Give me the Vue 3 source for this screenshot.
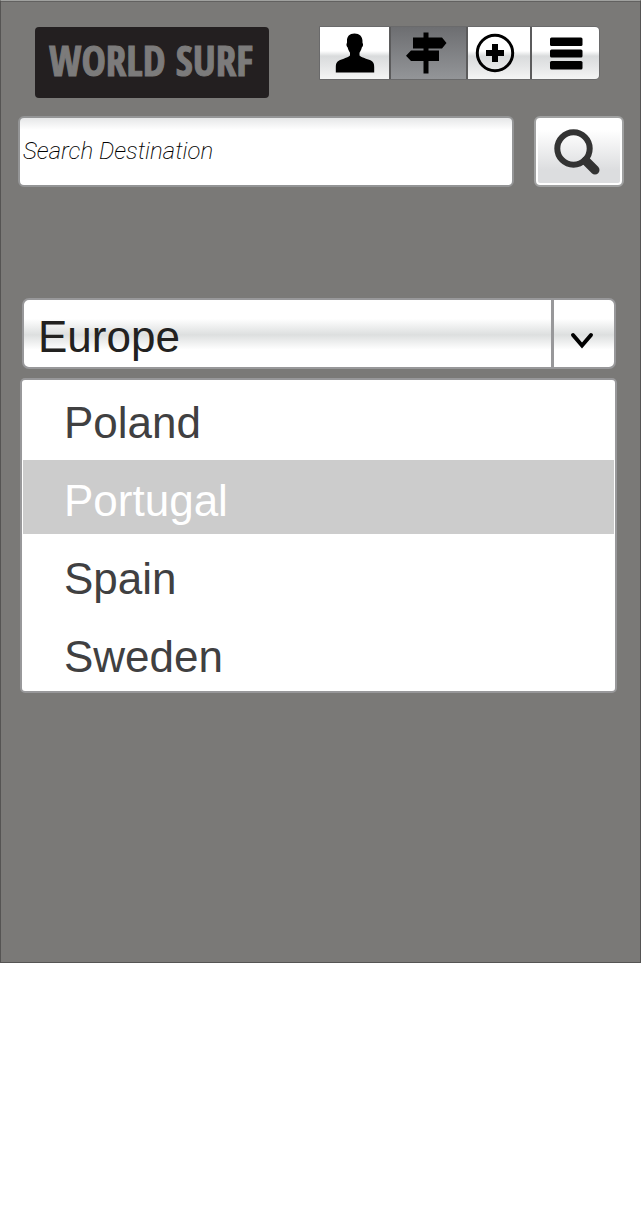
<script setup>
import { ref } from 'vue'

const query = ref('')
const region = ref('Europe')
const regions = ['Europe', 'Africa', 'Asia', 'Oceania']
const countries = ['Poland', 'Portugal', 'Spain', 'Sweden']
const country = ref('Portugal')
const section = ref('destinations')
</script>

<template>
  <main class="app">
    <header class="top">
      <h1 class="logo">WORLD SURF</h1>
      <nav class="tabs" aria-label="Main">
        <button type="button" class="tab profile" :class="{ active: section === 'profile' }" aria-label="Profile" @click="section = 'profile'">
          <svg width="40" height="40" viewBox="0 0 40 40" aria-hidden="true">
            <path d="M19.500 0.500C14.500 0.500 11.800 3.500 12 8C12 9 12.200 9.500 11.700 10.500C11 12 11.800 13.500 12.700 14.500C13.200 17 14.200 18.500 15 19.800V22.500C13 24.500 8 25.800 4.500 27.300C1.500 28.800 0.800 31 0.800 34V39.500H39.200V34C39.200 31 38.500 28.800 35.500 27.300C32 25.800 26.500 24.500 24.500 22.500V19.800C25.300 18.500 26.300 17 26.800 14.500C27.700 13.500 28.500 12 27.800 10.500C27.300 9.500 27.500 9 27.500 8C27.500 3.500 24.500 0.500 19.500 0.500Z" />
          </svg>
        </button>
        <button type="button" class="tab places" :class="{ active: section === 'destinations' }" aria-label="Destinations" @click="section = 'destinations'">
          <svg width="42" height="42" viewBox="0 0 42 42" aria-hidden="true">
            <path d="M18.500 0.500H23.500V5.500H37L41.500 11L37 16.500H23.500V18.500H34V29H23.500V41.500H18.500V29H6L1 23.700L6 18.500H18.500V16.500H8V5.500H18.500Z" />
          </svg>
        </button>
        <button type="button" class="tab add" :class="{ active: section === 'add' }" aria-label="Add" @click="section = 'add'">
          <svg width="40" height="40" viewBox="0 0 40 40" aria-hidden="true">
            <circle cx="20" cy="20" r="17.700" fill="none" stroke="#000" stroke-width="3" />
            <path d="M17 11H23V17H29V23H23V29H17V23H11V17H17Z" />
          </svg>
        </button>
        <button type="button" class="tab menu" :class="{ active: section === 'menu' }" aria-label="Menu" @click="section = 'menu'">
          <svg width="34" height="34" viewBox="0 0 34 34" aria-hidden="true">
            <rect x="1" y="1.500" width="32.500" height="8.500" rx="1.500" />
            <rect x="1" y="13.500" width="32.500" height="8" rx="1.500" />
            <rect x="1" y="25" width="32.500" height="8.500" rx="1.500" />
          </svg>
        </button>
      </nav>
    </header>

    <form class="search" @submit.prevent>
      <input v-model="query" class="field" type="text" placeholder="Search Destination" aria-label="Search Destination" />
      <button class="go" type="submit" aria-label="Search">
        <svg width="48" height="48" viewBox="0 0 48 48" aria-hidden="true">
          <circle cx="20.500" cy="20.500" r="16.200" fill="none" stroke="#333" stroke-width="6" />
          <path d="M33 33L42 42" stroke="#333" stroke-width="9" stroke-linecap="round" />
        </svg>
      </button>
    </form>

    <section class="picker">
      <div class="region">
        <select v-model="region" class="select" aria-label="Region">
          <option v-for="r in regions" :key="r">{{ r }}</option>
        </select>
        <span class="arrow" aria-hidden="true">
          <svg width="24" height="18" viewBox="0 0 24 18">
            <path d="M3 3L12 13.500L21 3" fill="none" stroke="#000" stroke-width="4" stroke-linecap="round" />
          </svg>
        </span>
      </div>
      <ul class="list" aria-label="Countries">
        <li v-for="c in countries" :key="c" class="row">
          <button type="button" class="item" :class="{ chosen: c === country }" @click="country = c">{{ c }}</button>
        </li>
      </ul>
    </section>
  </main>
</template>

<style>
body {
  background: #fff;
}
</style>

<style scoped>
.app {
  box-sizing: border-box;
  padding-bottom: 269px;
  border: 1px solid #555453;
  border-top-color: #a0a19f;
  background: #7a7977;
  box-shadow: inset 0 1px 0 #626160;
  font-family: "Liberation Sans", Arial, sans-serif;
}
.app * {
  box-sizing: border-box;
}
button {
  display: flex;
  align-items: center;
  justify-content: center;
  margin: 0;
  padding: 0;
  border: 0;
  font: inherit;
  cursor: pointer;
}
svg {
  display: block;
  flex: none;
}
.top {
  display: flex;
  justify-content: space-between;
  align-items: flex-start;
  padding: 25px 40px 0 34px;
}
.logo {
  display: flex;
  align-items: center;
  justify-content: center;
  width: 234px;
  height: 71px;
  margin: 1px 0 0;
  padding: 0 2px 6px 0;
  border-radius: 4px;
  background: #231f20;
  color: #7c7b7b;
  font-family: "Open Sans Condensed", "Liberation Sans Narrow", "Liberation Sans", sans-serif;
  font-size: 41px;
  line-height: 40px;
  font-weight: 700;
  -webkit-text-stroke: 1px #7c7b7b;
  white-space: nowrap;
}
.tabs {
  display: flex;
  height: 54px;
  border: 1px solid #6a6a6b;
  border-radius: 0 5px 5px 0;
  overflow: hidden;
}
.tab {
  background: linear-gradient(#fff 0%, #fff 46%, #d9dbdc 56%, #e4e5e6 75%, #f4f5f5 100%);
}
.tab + .tab {
  border-left: 2px solid #5b5b5c;
}
.tab.active {
  background: linear-gradient(#6d6e71, #939598);
}
.profile {
  width: 69px;
}
.places {
  width: 77px;
  padding-right: 6px;
}
.add {
  width: 64px;
  padding-right: 8px;
}
.menu {
  width: 69px;
}
.search {
  display: flex;
  gap: 20px;
  margin-top: 18px;
  padding: 0 16px 0 17px;
}
.field {
  flex: 1;
  min-width: 0;
  height: 71px;
  padding: 0 3px 1px;
  border: 2px solid #949596;
  border-radius: 6px;
  background: linear-gradient(#e6e7e8, #fff 18%);
  color: #000;
  font-family: Roboto, "Liberation Sans", sans-serif;
  font-size: 24px;
  font-weight: 200;
  font-style: italic;
}
.field::placeholder {
  color: #000;
  opacity: 1;
}
.go {
  width: 90px;
  height: 71px;
  padding-right: 4px;
  border: 2px solid #a0a1a1;
  border-radius: 6px;
  background: linear-gradient(#fff 18%, #dcdddf 78%);
  box-shadow: inset 0 0 0 2px #fff;
}
.picker {
  margin-top: 111px;
  padding: 0 23px 0 19px;
}
.region {
  display: flex;
  height: 71px;
  margin: 0 1px 0 2px;
  border: 2px solid #98989a;
  border-radius: 7px;
  background: linear-gradient(#fff 28%, #dddfdf 52%, #fff 74%);
  overflow: hidden;
}
.select {
  flex: 1;
  min-width: 0;
  padding: 5px 0 0 14px;
  border: 0;
  appearance: none;
  background: transparent;
  color: #222120;
  font-family: inherit;
  font-size: 44px;
}
.arrow {
  display: flex;
  align-items: center;
  justify-content: center;
  width: 63px;
  padding: 14px 4px 0 0;
  border-left: 3px solid #98989a;
}
.list {
  margin: 9px 0 0;
  padding: 2px 1px 0;
  border: 2px solid #98989a;
  border-radius: 5px;
  background: #fff;
  list-style: none;
}
.row {
  height: 78px;
}
.row:last-child {
  height: 75px;
}
.item {
  justify-content: flex-start;
  width: 100%;
  height: 74px;
  padding: 7px 0 0 41px;
  background: #fff;
  color: #404041;
  font-size: 44px;
  line-height: 50px;
}
.item.chosen {
  background: #ccc;
  color: #fff;
}
</style>
